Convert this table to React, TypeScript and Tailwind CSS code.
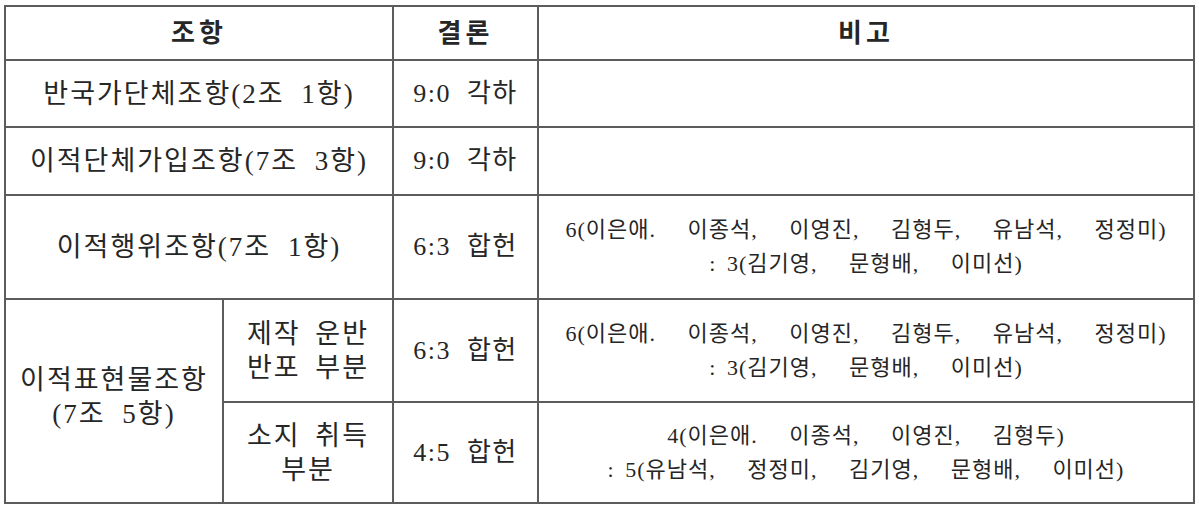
const cell = "border-2 border-[#5c5c5c] text-center align-middle";
const big = "text-[27px] leading-[34px] tracking-[2px] [word-spacing:8px]";
const sub = "text-[27px] leading-[34px] tracking-[2px] [word-spacing:6px]";
const res = "text-[26px] leading-[34px] tracking-[1.5px] [word-spacing:8px]";
const head = "text-[26px] font-bold tracking-[4px]";
const note = "text-[22px] leading-[34px] tracking-[1px] [word-spacing:25px]";

function Lines({ lines, className }: { lines: string[]; className: string }) {
  return (
    <div className={className}>
      {lines.map((l) => (
        <div key={l} className="whitespace-nowrap">
          {l.startsWith(": ") ? (
            <>
              <span className="[word-spacing:4px]">: </span>
              {l.slice(2)}
            </>
          ) : (
            l
          )}
        </div>
      ))}
    </div>
  );
}

export default function App() {
  return (
    <div className="w-[1199px] h-[512px] bg-white text-[#262626] font-['Liberation_Serif','Noto_Sans_CJK_KR',serif] pt-[5px] pl-[4px]">
      <table className="border-collapse table-fixed w-[1189px]">
        <colgroup>
          <col className="w-[218px]" />
          <col className="w-[170px]" />
          <col className="w-[145px]" />
          <col className="w-[656px]" />
        </colgroup>
        <tbody>
          <tr className="h-[54px]">
            <th colSpan={2} className={`${cell} ${head}`}>
              조항
            </th>
            <th className={`${cell} ${head}`}>결론</th>
            <th className={`${cell} ${head}`}>비고</th>
          </tr>
          <tr className="h-[67px]">
            <td colSpan={2} className={`${cell} ${big}`}>
              반국가단체조항(2조 1항)
            </td>
            <td className={`${cell} ${res}`}>9:0 각하</td>
            <td className={cell}></td>
          </tr>
          <tr className="h-[68px]">
            <td colSpan={2} className={`${cell} ${big}`}>
              이적단체가입조항(7조 3항)
            </td>
            <td className={`${cell} ${res}`}>9:0 각하</td>
            <td className={cell}></td>
          </tr>
          <tr className="h-[104px]">
            <td colSpan={2} className={`${cell} ${big}`}>
              이적행위조항(7조 1항)
            </td>
            <td className={`${cell} ${res}`}>6:3 합헌</td>
            <td className={cell}>
              <Lines
                className={note}
                lines={["6(이은애. 이종석, 이영진, 김형두, 유남석, 정정미)", ": 3(김기영, 문형배, 이미선)"]}
              />
            </td>
          </tr>
          <tr className="h-[103px]">
            <td rowSpan={2} className={cell}>
              <Lines className={`${big} -mt-[8px]`} lines={["이적표현물조항", "(7조 5항)"]} />
            </td>
            <td className={cell}>
              <Lines className={sub} lines={["제작 운반", "반포 부분"]} />
            </td>
            <td className={`${cell} ${res}`}>6:3 합헌</td>
            <td className={cell}>
              <Lines
                className={note}
                lines={["6(이은애. 이종석, 이영진, 김형두, 유남석, 정정미)", ": 3(김기영, 문형배, 이미선)"]}
              />
            </td>
          </tr>
          <tr className="h-[101px]">
            <td className={cell}>
              <Lines className={sub} lines={["소지 취득", "부분"]} />
            </td>
            <td className={`${cell} ${res}`}>4:5 합헌</td>
            <td className={cell}>
              <Lines
                className={note}
                lines={["4(이은애. 이종석, 이영진, 김형두)", ": 5(유남석, 정정미, 김기영, 문형배, 이미선)"]}
              />
            </td>
          </tr>
        </tbody>
      </table>
    </div>
  );
}
